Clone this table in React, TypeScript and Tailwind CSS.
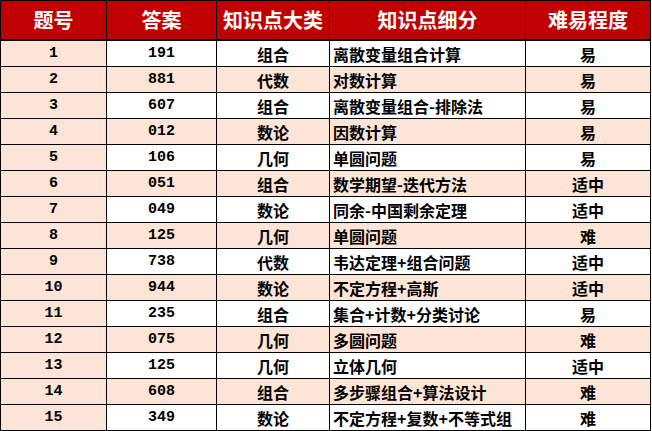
import React from "react";

const rows: [string, string, string, string, string][] = [
  ["1", "191", "组合", "离散变量组合计算", "易"],
  ["2", "881", "代数", "对数计算", "易"],
  ["3", "607", "组合", "离散变量组合-排除法", "易"],
  ["4", "012", "数论", "因数计算", "易"],
  ["5", "106", "几何", "单圆问题", "易"],
  ["6", "051", "组合", "数学期望-迭代方法", "适中"],
  ["7", "049", "数论", "同余-中国剩余定理", "适中"],
  ["8", "125", "几何", "单圆问题", "难"],
  ["9", "738", "代数", "韦达定理+组合问题", "适中"],
  ["10", "944", "数论", "不定方程+高斯", "适中"],
  ["11", "235", "组合", "集合+计数+分类讨论", "易"],
  ["12", "075", "几何", "多圆问题", "难"],
  ["13", "125", "几何", "立体几何", "适中"],
  ["14", "608", "组合", "多步骤组合+算法设计", "难"],
  ["15", "349", "数论", "不定方程+复数+不等式组", "难"],
];

const headers = ["题号", "答案", "知识点大类", "知识点细分", "难易程度"];
const cols = "grid grid-cols-[105px_109px_112px_195px_124px] gap-px";
const mono = { fontFamily: '"Liberation Mono", "Noto Sans CJK SC", monospace' };

export default function App() {
  return (
    <div className="w-[652px] h-[431px] bg-white">
      <div
        className="w-[651px] bg-black p-px flex flex-col gap-px"
        style={{ fontFamily: '"Noto Sans CJK SC", "Noto Sans", sans-serif' }}
      >
        <div className={`${cols} h-[38px] mb-px`}>
          {headers.map((h) => (
            <div
              key={h}
              className="bg-[#c00000] text-white text-[20px] font-bold flex items-center justify-center leading-none"
            >
              {h}
            </div>
          ))}
        </div>
        {rows.map((r, i) => {
          const pink = i % 2 === 1;
          const bg = pink ? "bg-[#fce4d6]" : "bg-white";
          return (
            <div key={i} className={`${cols} h-[25px]`}>
              <div
                className="bg-[#fce4d6] flex items-center justify-center text-[15px] font-bold text-black leading-none"
                style={mono}
              >
                {r[0]}
              </div>
              <div
                className={`${bg} flex items-center justify-center text-[15px] font-bold text-black leading-none`}
                style={mono}
              >
                {r[1]}
              </div>
              <div className={`${bg} flex items-center justify-center text-[16px] font-semibold text-black leading-none`}>
                {r[2]}
              </div>
              <div className={`${bg} flex items-center justify-start pl-[3px] text-[16px] font-semibold text-black leading-none whitespace-nowrap`}>
                {r[3]}
              </div>
              <div className={`${bg} flex items-center justify-center text-[16px] font-semibold text-black leading-none`}>
                {r[4]}
              </div>
            </div>
          );
        })}
      </div>
    </div>
  );
}
